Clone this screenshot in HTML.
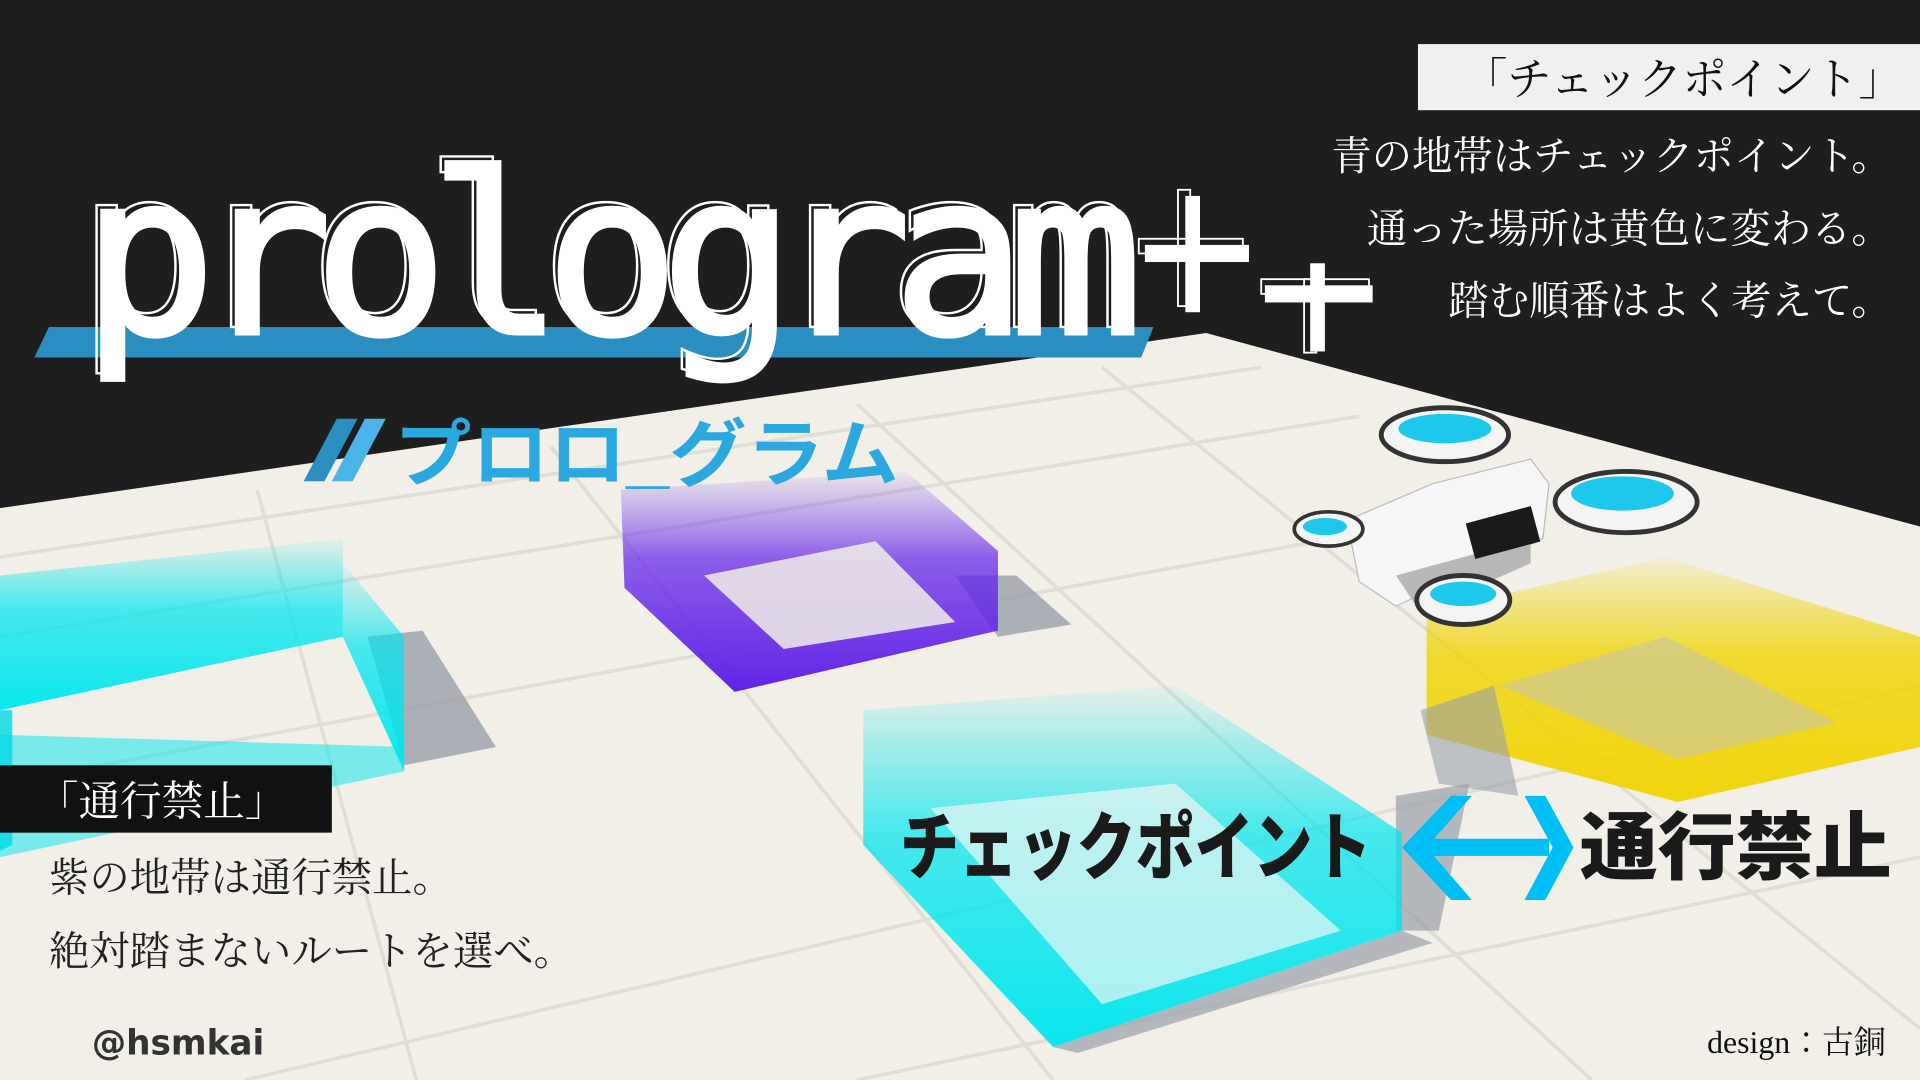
<!DOCTYPE html>
<html><head><meta charset="utf-8"><style>
html,body{margin:0;padding:0;background:#1e1e1e;overflow:hidden}
svg{display:block}
</style></head><body>
<svg width="1920" height="1080" viewBox="0 0 1568 882" preserveAspectRatio="none" xmlns="http://www.w3.org/2000/svg">
<defs>
<linearGradient id="cy" x1="0" y1="1" x2="0" y2="0"><stop offset="0" stop-color="#00e6ee" stop-opacity="0.95"/><stop offset="0.6" stop-color="#00e6ee" stop-opacity="0.7"/><stop offset="1" stop-color="#00e6ee" stop-opacity="0.05"/></linearGradient>
<linearGradient id="pu" x1="0" y1="1" x2="0" y2="0"><stop offset="0" stop-color="#5a18e6" stop-opacity="0.95"/><stop offset="0.6" stop-color="#6a2ae8" stop-opacity="0.75"/><stop offset="1" stop-color="#7a40f0" stop-opacity="0.05"/></linearGradient>
<linearGradient id="ye" x1="0" y1="1" x2="0" y2="0"><stop offset="0" stop-color="#f0d400" stop-opacity="0.95"/><stop offset="0.6" stop-color="#f0d400" stop-opacity="0.8"/><stop offset="1" stop-color="#f0d400" stop-opacity="0.1"/></linearGradient>
</defs>
<rect width="1568" height="882" fill="#1e1e1e"/>
<!-- floor -->
<polygon points="0,415 985,272 1568,430 1568,882 0,882" fill="#f1efe8"/>
<g stroke="#e0ddd4" stroke-width="3" fill="none">
<line x1="0" y1="455" x2="1030" y2="300"/>
<line x1="0" y1="520" x2="1110" y2="340"/>
<line x1="0" y1="640" x2="1250" y2="410"/>
<line x1="200" y1="882" x2="1568" y2="560"/>
<line x1="700" y1="882" x2="1568" y2="700"/>
<line x1="210" y1="400" x2="340" y2="882"/>
<line x1="450" y1="365" x2="860" y2="882"/>
<line x1="700" y1="330" x2="1300" y2="882"/>
<line x1="900" y1="300" x2="1568" y2="840"/>
</g>
<!-- shadows -->
<polygon points="300,520 345,515 405,610 330,625" fill="#9aa0aa" opacity="0.8"/>
<polygon points="780,470 830,470 875,510 815,520" fill="#9aa0aa" opacity="0.8"/>
<polygon points="1140,650 1200,640 1175,760 1140,760" fill="#9aa0aa" opacity="0.7"/>
<polygon points="860,855 1145,760 1170,770 880,860" fill="#9aa0aa" opacity="0.7"/>
<!-- left cyan box -->
<polygon points="0,470 280,440 280,520 0,580" fill="url(#cy)"/>
<polygon points="280,460 330,520 330,630 280,520" fill="url(#cy)"/>
<polygon points="0,600 330,610 330,630 0,700" fill="#00e6ee" opacity="0.5"/>
<polygon points="0,580 10,580 10,690 0,695" fill="#00d8e6" opacity="0.8"/>
<!-- purple box -->
<polygon points="507,400 740,385 815,450 815,515 600,565 510,480" fill="url(#pu)"/>
<polygon points="575,470 715,442 780,508 640,530" fill="#f1efe8" opacity="0.85"/>
<!-- bottom cyan box -->
<polygon points="705,580 960,560 1145,680 1145,760 860,855 705,690" fill="url(#cy)"/>
<polygon points="760,660 960,640 1095,760 900,820" fill="#eef5f4" opacity="0.7"/>
<!-- yellow box -->
<polygon points="1165,500 1360,455 1568,520 1568,610 1370,655 1165,600" fill="url(#ye)"/>
<polygon points="1225,560 1360,520 1500,590 1370,620" fill="#c8c4a8" opacity="0.6"/>
<polygon points="1160,580 1220,560 1240,650 1175,640" fill="#9aa0aa" opacity="0.6"/>
<!-- drone -->
<g>
<polygon points="1100,425 1170,395 1250,375 1265,395 1260,440 1140,495 1110,475" fill="#f6f6f6" stroke="#bbb"/>
<polygon points="1140,470 1250,440 1250,460 1160,500" fill="#b8b8b8"/>
<rect x="1200" y="420" width="55" height="30" fill="#1a1a1a" transform="rotate(-15 1227 435)"/>
<ellipse cx="1180" cy="355" rx="52" ry="22" fill="#f4f4f4" stroke="#333" stroke-width="4"/>
<ellipse cx="1180" cy="350" rx="38" ry="12" fill="#1ec8ec"/>
<ellipse cx="1328" cy="410" rx="58" ry="25" fill="#f4f4f4" stroke="#333" stroke-width="4"/>
<ellipse cx="1325" cy="403" rx="42" ry="14" fill="#1ec8ec"/>
<ellipse cx="1195" cy="490" rx="38" ry="20" fill="#f4f4f4" stroke="#333" stroke-width="4"/>
<ellipse cx="1195" cy="485" rx="27" ry="10" fill="#1ec8ec"/>
<ellipse cx="1085" cy="432" rx="28" ry="14" fill="#f4f4f4" stroke="#333" stroke-width="3"/>
<ellipse cx="1082" cy="430" rx="18" ry="7" fill="#1ec8ec"/>
</g>
<!-- title bar -->
<polygon points="40,267 942,267 932,292 28,292" fill="#2a8fc0"/>
<g font-family="DejaVu Sans Mono, Liberation Mono, monospace" font-size="182" letter-spacing="-15">
<text x="62" y="267" fill="none" stroke="#fff" stroke-width="2">prologram</text>
<text x="67" y="272" fill="#fff" stroke="#fff" stroke-width="4">prologram</text>
</g>
<g fill="#fff">
<rect x="962" y="155" width="10" height="95" fill="none" stroke="#fff" stroke-width="1.5"/>
<rect x="930" y="195" width="85" height="12" fill="none" stroke="#fff" stroke-width="1.5"/>
<rect x="968" y="160" width="12" height="95"/><rect x="935" y="200" width="85" height="14"/>
<rect x="1065" y="228" width="10" height="60" fill="none" stroke="#fff" stroke-width="1.5"/>
<rect x="1030" y="228" width="88" height="12" fill="none" stroke="#fff" stroke-width="1.5"/>
<rect x="1070" y="215" width="12" height="72"/><rect x="1033" y="233" width="88" height="14"/>
</g>
<!-- subtitle -->
<polygon points="275,342 292,342 265,393 248,393" fill="#2a8fc0"/>
<polygon points="298,342 315,342 288,393 271,393" fill="#4ab4e8"/>
<text x="322" y="392" font-family="Liberation Sans, Noto Sans CJK JP, sans-serif" font-weight="bold" font-size="60" fill="#2ca8e0" textLength="412" lengthAdjust="spacingAndGlyphs">プロロ_グラム</text>
<!-- top right -->
<rect x="1158" y="36" width="410" height="54" fill="#f0f0f0"/>
<g font-family="Liberation Serif, Noto Serif CJK JP, Noto Serif CJK SC, serif">
<text x="1195" y="77" font-size="36" fill="#111">「チェックポイント」</text>
<g font-size="33" fill="#fff" text-anchor="end">
<text x="1545" y="139">青の地帯はチェックポイント。</text>
<text x="1545" y="198">通った場所は黄色に変わる。</text>
<text x="1545" y="257">踏む順番はよく考えて。</text>
</g>
<rect x="0" y="625" width="271" height="55" fill="#111"/>
<text x="30" y="666" font-size="34" fill="#fff">「通行禁止」</text>
<g font-size="33" fill="#222">
<text x="40" y="728">紫の地帯は通行禁止。</text>
<text x="40" y="788">絶対踏まないルートを選べ。</text>
</g>
<text x="1540" y="860" text-anchor="end" font-size="26" fill="#111">design：古銅</text>
</g>
<text x="75" y="861" font-family="DejaVu Sans, Liberation Sans, sans-serif" font-weight="bold" font-size="28" fill="#333">@hsmkai</text>
<!-- center caption -->
<g font-family="Liberation Sans, Noto Sans CJK JP, sans-serif" font-weight="900" fill="#1a1a1a" font-size="60">
<text x="735" y="713" textLength="385" lengthAdjust="spacingAndGlyphs">チェックポイント</text>
<text x="1290" y="713" textLength="255" lengthAdjust="spacingAndGlyphs">通行禁止</text>
</g>
<g fill="#00bff5">
<polygon points="1185,650 1202,650 1165,692 1202,735 1185,735 1145,692"/>
<rect x="1160" y="685" width="105" height="14"/>
<polygon points="1245,650 1262,650 1285,692 1262,735 1245,735 1268,692"/>
</g>
</svg>
</body></html>
